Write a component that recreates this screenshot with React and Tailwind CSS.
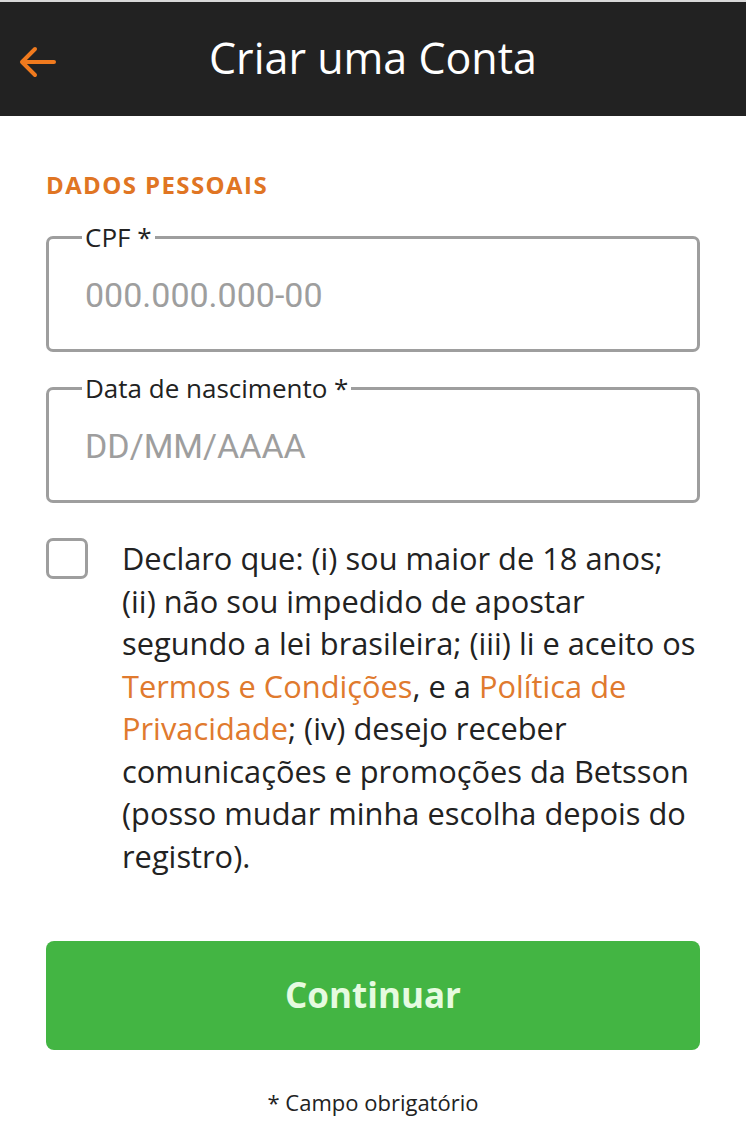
import React, { useState } from 'react';

const ArrowLeft = () => (
  <svg width="40" height="36" viewBox="0 0 40 36" fill="none" stroke="#f07a1e" strokeWidth="4" strokeLinecap="round" strokeLinejoin="round">
    <path d="M36 18H5" />
    <path d="M17 5L4 18l13 13" />
  </svg>
);

const OutlinedField = ({ label, placeholder }) => (
  <fieldset className="border-[3px] border-[#9e9e9e] rounded-[7px] h-[128px] px-[36px] m-0">
    <legend className="px-[3px] text-[26px] leading-none text-[#222] -ml-[3px]">{label}</legend>
    <input
      type="text"
      placeholder={placeholder}
      className="w-full h-[90px] outline-none bg-transparent text-[34px] text-[#222] placeholder:text-[#9e9e9e] font-['Roboto',sans-serif]"
    />
  </fieldset>
);

export default function App() {
  const [checked, setChecked] = useState(false);

  return (
    <div className="min-h-[1123px] bg-white font-['Open_Sans','Noto_Sans',sans-serif]">
      {/* Header */}
      <header className="h-[116px] bg-[#222222] border-t-2 border-[#d8d8d8] flex items-center relative">
        <button className="absolute left-[18px] top-[42px]">
          <ArrowLeft />
        </button>
        <h1 className="w-full text-center text-white text-[43px] leading-none -mt-[4px]">Criar uma Conta</h1>
      </header>

      <main className="px-[46px] pt-[57px]">
        <h2 className="text-[#e07523] font-bold text-[24px] tracking-[1.4px] leading-none">DADOS PESSOAIS</h2>

        <div className="mt-[27px] flex flex-col gap-[23px]">
          <OutlinedField label="CPF *" placeholder="000.000.000-00" />
          <OutlinedField label="Data de nascimento *" placeholder="DD/MM/AAAA" />
        </div>

        <div className="mt-[35px] flex gap-[34px]">
          <button
            onClick={() => setChecked(!checked)}
            className="w-[42px] h-[41px] shrink-0 rounded-[7px] border-[3px] border-[#9e9e9e] bg-white"
          />
          <p className="text-[30.8px] leading-[42.5px] text-[#222] -mt-[1px] -mr-[2px]">
            Declaro que: (i) sou maior de 18 anos; (ii) não sou impedido de apostar segundo a lei brasileira; (iii) li e aceito os{' '}
            <a className="text-[#e07a2e]">Termos e Condições</a>, e a{' '}
            <a className="text-[#e07a2e]">Política de Privacidade</a>; (iv) desejo receber comunicações e promoções da Betsson (posso mudar minha escolha depois do registro).
          </p>
        </div>

        <button className="mt-[64px] w-full h-[109px] rounded-[8px] bg-[#43b543] text-[#e6fbe0] font-bold text-[35px]">
          Continuar
        </button>

        <p className="mt-[36px] text-center text-[22px] text-[#222]">* Campo obrigatório</p>
      </main>
    </div>
  );
}
